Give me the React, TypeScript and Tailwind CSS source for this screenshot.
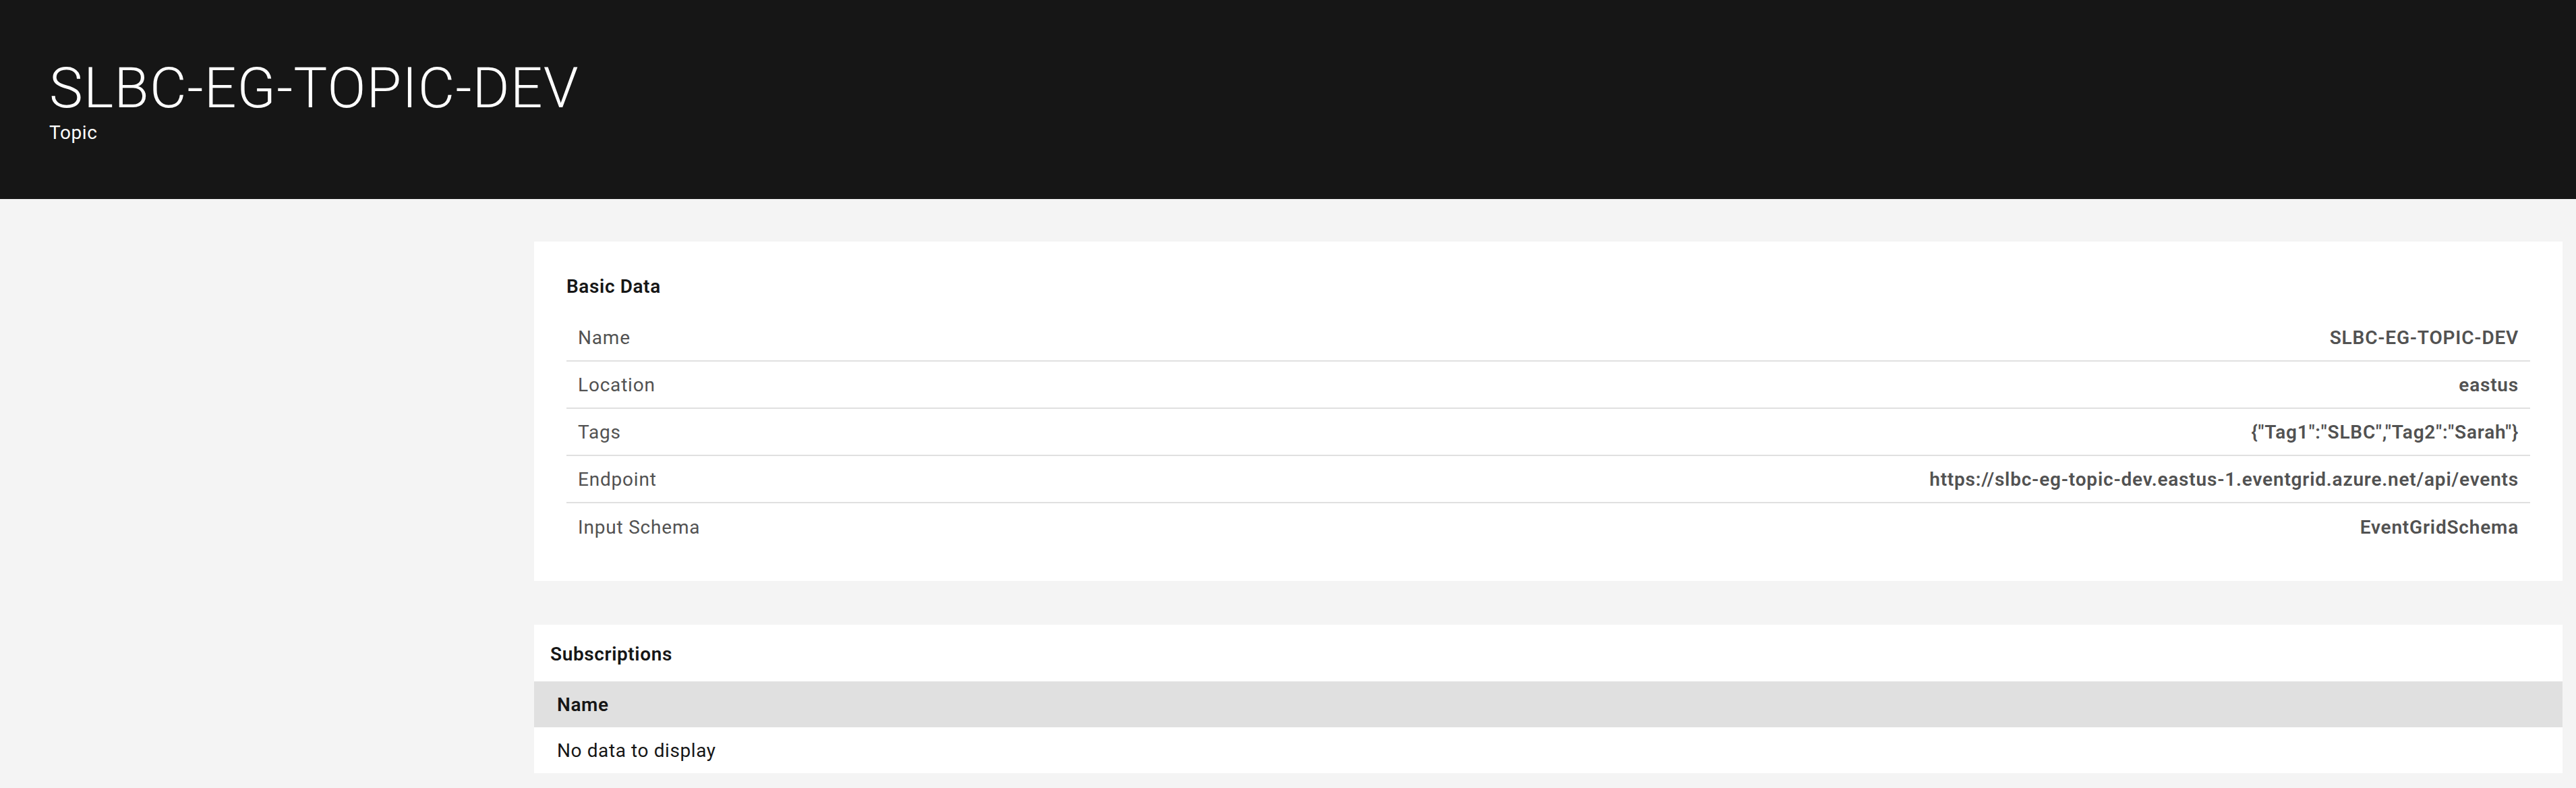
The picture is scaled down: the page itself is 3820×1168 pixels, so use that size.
import React from 'react'

interface DataRow {
  label: string
  value: string
}

const basicData: DataRow[] = [
  { label: 'Name', value: 'SLBC-EG-TOPIC-DEV' },
  { label: 'Location', value: 'eastus' },
  { label: 'Tags', value: '{"Tag1":"SLBC","Tag2":"Sarah"}' },
  { label: 'Endpoint', value: 'https://slbc-eg-topic-dev.eastus-1.eventgrid.azure.net/api/events' },
  { label: 'Input Schema', value: 'EventGridSchema' },
]

export default function App(): JSX.Element {
  return (
    <main className="min-h-screen bg-[#f4f4f4] font-['Roboto','Liberation_Sans',sans-serif]">
      {/* Page header */}
      <header className="h-[295px] bg-[#161616] pl-[73px] pt-[81px] text-white">
        <h1 className="text-[84px] font-light leading-[100px] tracking-[1.1px]">SLBC-EG-TOPIC-DEV</h1>
        <p className="text-[28px] leading-[32px] tracking-[0.6px]">Topic</p>
      </header>

      <div className="flex pt-[63px] pb-[21px]">
        <aside className="w-[792px] shrink-0" />

        <div className="flex-1 pr-[20px] flex flex-col gap-[65px]">
          {/* Basic Data */}
          <section className="bg-white px-12 pt-[49px] pb-[45px]">
            <h2 className="text-[28px] font-semibold leading-[36px] tracking-[0.6px] text-[#161616] mb-[23px]">
              Basic Data
            </h2>
            <div>
              {basicData.map((row, i) => (
                <div
                  key={row.label}
                  className={`h-[70px] flex items-center justify-between px-[17px] pt-[2px] text-[28px] tracking-[0.8px] ${
                    i < basicData.length - 1 ? 'border-b-2 border-[#e0e0e0]' : ''
                  }`}
                >
                  <span className="text-[#525252]">{row.label}</span>
                  <span className="font-semibold text-[#525252]">{row.value}</span>
                </div>
              ))}
            </div>
          </section>

          {/* Subscriptions */}
          <section className="bg-white text-[28px] tracking-[0.6px]">
            <div className="h-[84px] flex items-center pl-6 pt-[3px]">
              <h2 className="font-semibold text-[#161616]">Subscriptions</h2>
            </div>
            <div className="h-[68px] flex items-center bg-[#e0e0e0] pl-[34px] pt-[2px]">
              <span className="font-semibold text-[#161616]">Name</span>
            </div>
            <div className="h-[68px] flex items-center pl-[34px] pt-[2px]">
              <span className="text-[#161616]">No data to display</span>
            </div>
          </section>
        </div>
      </div>
    </main>
  )
}
